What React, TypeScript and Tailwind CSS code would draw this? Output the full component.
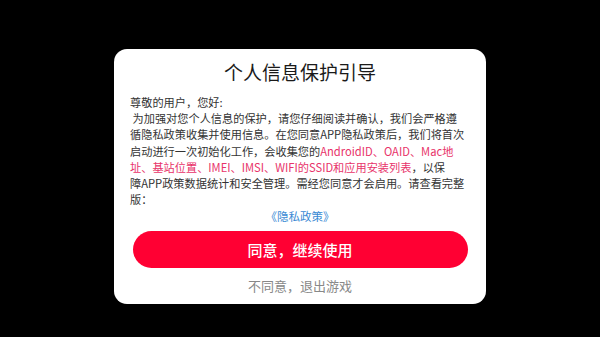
export default function App() {
  return (
    <div
      className="flex h-[337px] w-[600px] justify-center bg-black pt-[49px]"
      style={{ fontFamily: '"Noto Sans CJK SC", "Noto Sans", sans-serif' }}
    >
      <div className="flex h-[255px] w-[372px] flex-col rounded-[13px] bg-white px-[16px] pt-[11px]">
        {/* 标题 */}
        <h1 className="text-center text-[19px] leading-[24px] text-[#1a1a1a]">个人信息保护引导</h1>

        {/* 正文 */}
        <div className="mt-[10px] w-[338px] text-[11.2px] leading-[16.2px] text-[#333]">
          <p>尊敬的用户，您好:</p>
          <p>
            &nbsp;为加强对您个人信息的保护，请您仔细阅读并确认，我们会严格遵循隐私政策收集并使用信息。在您同意APP隐私政策后，我们将首次启动进行一次初始化工作，会收集您的
            <span className="text-[#e8336a]">AndroidID、OAID、Mac地址、基站位置、IMEI、IMSI、WIFI的SSID和应用安装列表</span>
            ，以保
            <br />
            障APP政策数据统计和安全管理。需经您同意才会启用。请查看完整版：
          </p>
        </div>
        <p className="text-center text-[11.5px] leading-[18px] text-[#3a8ad4]">《隐私政策》</p>

        {/* 按钮 */}
        <button className="mx-auto mt-[6px] flex h-[37px] w-[335px] items-center justify-center rounded-full bg-[#ff0033] text-[15px] font-medium text-white">
          同意，继续使用
        </button>
        <p className="mt-[8px] text-center text-[13px] leading-[20px] text-[#888]">不同意，退出游戏</p>
      </div>
    </div>
  );
}
